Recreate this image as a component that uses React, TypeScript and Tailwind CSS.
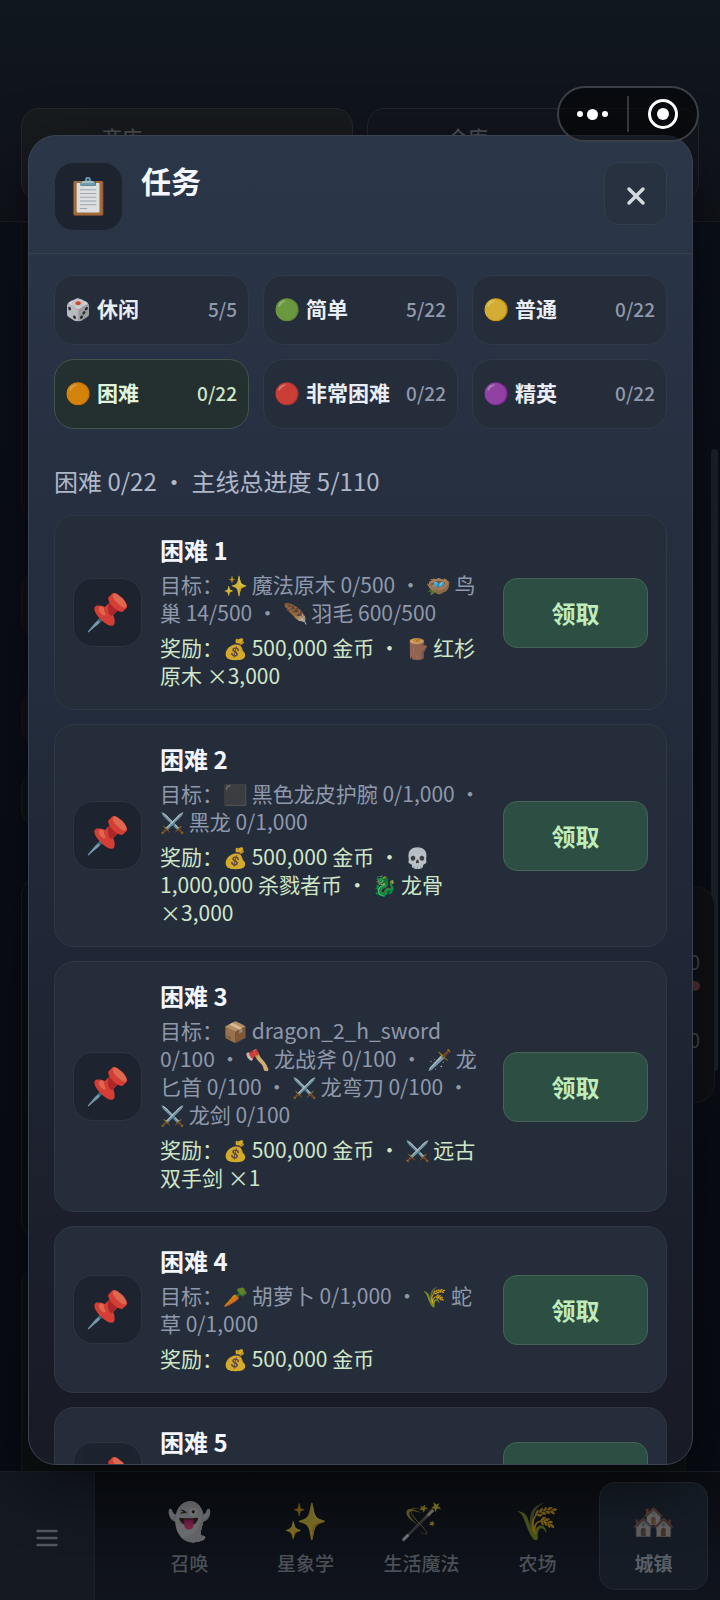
import type { ReactNode } from 'react';
import { X } from 'lucide-react';

const tabs = [
  { icon: '🎲', name: '休闲', progress: '5/5' },
  { icon: '🟢', name: '简单', progress: '5/22' },
  { icon: '🟡', name: '普通', progress: '0/22' },
  { icon: '🟠', name: '困难', progress: '0/22', active: true },
  { icon: '🔴', name: '非常困难', progress: '0/22' },
  { icon: '🟣', name: '精英', progress: '0/22' },
];

const tasks = [
  {
    title: '困难 1',
    goal: '✨ 魔法原木 0/500 • 🪺 鸟巢 14/500 • 🪶 羽毛 600/500',
    reward: '💰 500,000 金币 • 🪵 红杉原木 ×3,000',
  },
  {
    title: '困难 2',
    goal: '⬛ 黑色龙皮护腕 0/1,000 • ⚔️ 黑龙 0/1,000',
    reward: '💰 500,000 金币 • 💀 1,000,000 杀戮者币 • 🐉 龙骨 ×3,000',
  },
  {
    title: '困难 3',
    goal: '📦 dragon_2_h_sword 0/100 • 🪓 龙战斧 0/100 • 🗡️ 龙匕首 0/100 • ⚔️ 龙弯刀 0/100 • ⚔️ 龙剑 0/100',
    reward: '💰 500,000 金币 • ⚔️ 远古双手剑 ×1',
  },
  {
    title: '困难 4',
    goal: '🥕 胡萝卜 0/1,000 • 🌾 蛇草 0/1,000',
    reward: '💰 500,000 金币',
  },
  {
    title: '困难 5',
    goal: '',
    reward: '',
  },
];

const navItems = [
  { icon: '👻', name: '召唤' },
  { icon: '✨', name: '星象学' },
  { icon: '🪄', name: '生活魔法' },
  { icon: '🌾', name: '农场' },
  { icon: '🏘️', name: '城镇', active: true },
];

function IconBox({ children }: { children: ReactNode }) {
  return (
    <div className="flex h-[69px] w-[69px] shrink-0 items-center justify-center rounded-[20px] border border-[#2d3541] bg-[#1d2430] pb-[8px] text-[36px] leading-none">
      <span className="opacity-85">{children}</span>
    </div>
  );
}

// Emoji are drawn slightly smaller and dimmer than the text around them
function Dimmed({ text }: { text: string }) {
  const parts = text.split(/(\p{Extended_Pictographic}\uFE0F?)/u);
  return (
    <>
      {parts.map((part, i) =>
        i % 2 ? <span key={i} className="-mr-[1px] text-[20px] leading-none opacity-80">{part}</span> : part
      )}
    </>
  );
}

function TaskCard({ task }: { task: (typeof tasks)[number] }) {
  return (
    <li className="flex shrink-0 items-center gap-[18px] rounded-[20px] border border-[#303844] bg-[#252d3b] px-[18px] py-[16px]">
      <IconBox>📌</IconBox>
      <div className="min-w-0 flex-1 pb-[4px]">
        <h3 className="text-[24px] font-bold leading-[35px] text-[#f3f6fc]">{task.title}</h3>
        <p className="mt-[3px] text-[21px] leading-[28px] text-[#8f99ab]">
          目标：<Dimmed text={task.goal} />
        </p>
        <p className="mt-[7px] text-[21px] leading-[28px] text-[#cfe6c8]">
          奖励：<Dimmed text={task.reward} />
        </p>
      </div>
      <button
        type="button"
        className="h-[70px] w-[145px] shrink-0 rounded-[14px] border border-[#466355] bg-[#2d4e42] text-[24px] font-bold text-[#c0ecbb]"
      >
        领取
      </button>
    </li>
  );
}

function TaskDialog() {
  return (
    <section
      role="dialog"
      aria-labelledby="dialog-title"
      className="flex min-h-0 flex-1 flex-col overflow-hidden rounded-[28px] border border-[#3a4350] bg-linear-to-b from-[#2b3649] via-[#222a3a] to-[#181a25] shadow-[0_20px_60px_rgba(0,0,0,0.5)]"
    >
      <header className="flex items-start gap-[18px] border-b border-[#36404c] px-[25px] pt-[26px] pb-[22px]">
        <IconBox>📋</IconBox>
        <h2 id="dialog-title" className="flex-1 text-[30px] font-bold leading-[36px] text-[#f3f6fc]">
          任务
        </h2>
        <button
          type="button"
          aria-label="关闭"
          className="flex h-[63px] w-[63px] items-center justify-center rounded-[14px] border border-[#343e4b] bg-[#273140] pt-[5px] text-[#d5d8dc]"
        >
          <X className="h-7 w-7" strokeWidth={3} />
        </button>
      </header>

      <div className="flex min-h-0 flex-1 flex-col px-[25px] pt-[21px]">
        <div className="grid shrink-0 grid-cols-3 gap-[14px]">
          {tabs.map((tab) => (
            <button
              key={tab.name}
              type="button"
              className={`flex h-[70px] items-center gap-[6px] whitespace-nowrap rounded-[20px] border pb-[2px] pr-[11px] pl-[10px] text-[21px] font-bold ${
                tab.active
                  ? 'border-[#43534e] bg-[#242f30] text-[#e0f3dc]'
                  : 'border-[#303946] bg-[#252d3b] text-[#e9eef6]'
              }`}
            >
              <span className="opacity-80">{tab.icon}</span>
              <span>{tab.name}</span>
              <span
                className={`ml-auto text-[19px] font-medium ${tab.active ? 'text-[#cfe6c8]' : 'text-[#8f99ab]'}`}
              >
                {tab.progress}
              </span>
            </button>
          ))}
        </div>

        <p className="mt-[35px] shrink-0 text-[24px] leading-[34px] text-[#aeb7c8]">
          困难 0/22 • 主线总进度 5/110
        </p>

        <ul className="mt-[17px] flex min-h-0 flex-1 flex-col gap-[14px] overflow-hidden">
          {tasks.map((task) => (
            <TaskCard key={task.title} task={task} />
          ))}
        </ul>
      </div>
    </section>
  );
}

function BackgroundPage() {
  return (
    <div className="flex min-h-0 flex-1 flex-col">
      <header className="grid h-[222px] shrink-0 grid-cols-2 gap-[14px] border-b border-[#1a1f26] bg-linear-to-b from-[#10171f] to-[#10121a] px-[21px] pt-[108px] pb-[20px]">
        <div className="rounded-[18px] border border-[#25282b] bg-[#181b1e] pt-[15px] pl-[80px] text-[20px] font-medium leading-[28px] text-[#4b4e52]">
          商店
        </div>
        <div className="rounded-[18px] border border-[#22262d] bg-[#12151d] pt-[15px] pl-[80px] text-[20px] font-medium leading-[28px] text-[#4b4e52]">
          仓库
        </div>
      </header>
      <div className="flex min-h-0 flex-1 flex-col overflow-hidden bg-linear-to-b from-[#0b1018] to-[#080b13] pr-[34px] pl-[21px]">
        <div className="h-[298px] shrink-0 rounded-b-[20px] border border-[#15181b] bg-[#0d0f12]" />
        <div className="mt-[49px] h-[71px] shrink-0 rounded-[20px] border border-[#15181b] bg-[#101214]" />
        <div className="mt-[48px] h-[59px] shrink-0 rounded-[20px] border border-[#15181b] bg-[#101214]" />
        <div className="mt-[22px] h-[60px] shrink-0 rounded-[20px] border border-[#142119] bg-[#0d1414]" />
        <div className="mt-[47px] h-[364px] shrink-0 rounded-[20px] border border-[#172019] bg-[#0b0f10]" />
        <div className="mt-[26px] h-[240px] shrink-0 rounded-t-[20px] border border-[#13191a] bg-[#0d1112]" />
      </div>
      <nav className="flex h-[129px] shrink-0 border-t border-[#191f26] bg-linear-to-b from-[#0a0d12] to-[#10141d]">
        <button
          type="button"
          aria-label="菜单"
          className="flex w-[95px] shrink-0 items-center justify-center border-r border-[#1b2129] bg-[#141922] pt-[4px]"
        >
          <svg className="h-5 w-6 text-[#54585e]" viewBox="0 0 24 20" fill="none" stroke="currentColor" strokeWidth="2.4" strokeLinecap="round">
            <path d="M2.5 3h19M2.5 10h19M2.5 17h19" />
          </svg>
        </button>
        <div className="flex flex-1 justify-end gap-[7px] py-[10px] pr-[12px]">
          {navItems.map((item) => (
            <a
              key={item.name}
              href="#"
              className={`flex w-[109px] flex-col items-center rounded-[16px] border pt-[13px] text-[19px] leading-[28px] ${
                item.active
                  ? 'border-[#202833] bg-[#151c25] font-bold text-[#585e66]'
                  : 'border-transparent font-medium text-[#4b5057]'
              }`}
            >
              <span className={`text-[36px] leading-[44px] ${item.active ? 'opacity-35' : 'opacity-45'}`}>
                {item.icon}
              </span>
              <span className="mt-[9px] whitespace-nowrap">{item.name}</span>
            </a>
          ))}
        </div>
      </nav>
    </div>
  );
}

export default function App() {
  return (
    <div className="relative flex h-screen flex-col overflow-hidden bg-[#080b13] font-['Noto_Sans_CJK_SC','Noto_Sans',sans-serif]">
      <BackgroundPage />

      {/* Panel and scroll bar peeking out on the right */}
      <div className="absolute top-[449px] right-[2px] h-[622px] w-[7px] rounded-full bg-[#1b222c]" />
      <div className="absolute top-[886px] right-[5px] h-[217px] w-[60px] rounded-[20px] border border-[#1b1e22] bg-[#0f1114] pt-[60px] pr-[14px] text-right text-[20px] leading-[30px] text-[#45484c]">
        <p>0</p>
        <p className="flex h-[18px] items-center justify-end">
          <span className="h-[10px] w-[10px] rounded-full bg-[#53302f]" />
        </p>
        <p className="mt-[30px]">0</p>
      </div>

      <div className="absolute inset-0 flex flex-col pt-[135px] pr-[27px] pb-[135px] pl-7">
        <TaskDialog />
      </div>

      <div className="absolute top-[86px] right-[21px] flex h-[56px] w-[142px] items-center rounded-full border-2 border-[#3c3f45] bg-black/50">
        <button type="button" aria-label="更多" className="flex w-[68px] items-center justify-center gap-[4px] pr-[2px]">
          <span className="h-[6px] w-[6px] rounded-full bg-white" />
          <span className="h-[11px] w-[11px] rounded-full bg-white" />
          <span className="h-[6px] w-[6px] rounded-full bg-white" />
        </button>
        <span className="h-[36px] w-[2px] bg-[#34373c]" />
        <button type="button" aria-label="退出" className="flex flex-1 items-center justify-center">
          <span className="flex h-[30px] w-[30px] items-center justify-center rounded-full border-[3px] border-white">
            <span className="h-[12px] w-[12px] rounded-full bg-white" />
          </span>
        </button>
      </div>
    </div>
  );
}
